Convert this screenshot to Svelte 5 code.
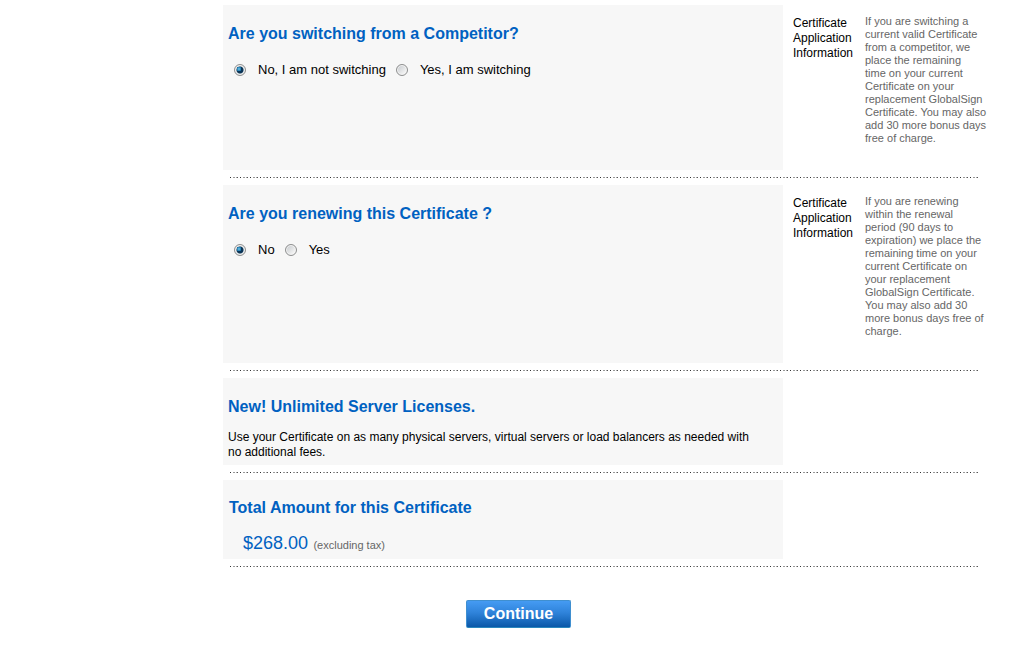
<script>
  let switching = $state('no');
  let renewing = $state('no');
</script>

<main>
  <form onsubmit={(e) => e.preventDefault()}>
    <section class="row">
      <fieldset class="panel">
        <legend>Are you switching from a Competitor?</legend>
        <div class="options">
          <label><input type="radio" name="switching" value="no" bind:group={switching} />No, I am not switching</label>
          <label><input type="radio" name="switching" value="yes" bind:group={switching} />Yes, I am switching</label>
        </div>
      </fieldset>
      <aside>
        <h3>Certificate Application Information</h3>
        <p>
          If you are switching a<br />current valid Certificate<br />from a competitor, we<br />place the remaining<br />time on your current<br />Certificate on your<br />replacement GlobalSign<br />Certificate. You may also<br />add 30 more bonus days<br />free of charge.
        </p>
      </aside>
    </section>
    <div class="divider"></div>

    <section class="row">
      <fieldset class="panel">
        <legend>Are you renewing this Certificate ?</legend>
        <div class="options">
          <label><input type="radio" name="renewing" value="no" bind:group={renewing} />No</label>
          <label><input type="radio" name="renewing" value="yes" bind:group={renewing} />Yes</label>
        </div>
      </fieldset>
      <aside>
        <h3>Certificate Application Information</h3>
        <p>
          If you are renewing<br />within the renewal<br />period (90 days to<br />expiration) we place the<br />remaining time on your<br />current Certificate on<br />your replacement<br />GlobalSign Certificate.<br />You may also add 30<br />more bonus days free of<br />charge.
        </p>
      </aside>
    </section>
    <div class="divider"></div>

    <section class="row">
      <div class="panel licenses">
        <h2>New! Unlimited Server Licenses.</h2>
        <p>Use your Certificate on as many physical servers, virtual servers or load balancers as needed with no additional fees.</p>
      </div>
    </section>
    <div class="divider"></div>

    <section class="row">
      <div class="panel total">
        <h2>Total Amount for this Certificate</h2>
        <p><span class="price">$268.00</span> <small>(excluding tax)</small></p>
      </div>
    </section>
    <div class="divider"></div>

    <div class="actions"><button type="submit">Continue</button></div>
  </form>
</main>

<style>
  :global(body) {
    background: #fff;
  }

  main {
    padding: 5px 47px 20px 223px;
    font-family: Arial, "Liberation Sans", sans-serif;
    font-size: 12px;
    line-height: 15px;
    color: #000;
  }

  .row {
    display: grid;
    grid-template-columns: minmax(0, 1fr) 199px;
  }

  .panel {
    min-width: 0;
    margin: 0;
    border: 0;
    padding: 19px 5px 5px;
    background: #f7f7f7;
  }

  h2,
  legend {
    float: left;
    width: 100%;
    margin: 0;
    padding: 0;
    font-size: 16px;
    line-height: 20px;
    font-weight: bold;
    color: #0061c1;
  }

  .options {
    clear: both;
    display: flex;
    gap: 10px;
    padding: 17px 0 0 6px;
    font-size: 13px;
    line-height: 18px;
  }

  label {
    display: flex;
    align-items: center;
    gap: 12px;
  }

  input {
    appearance: none;
    box-sizing: border-box;
    width: 12px;
    height: 12px;
    margin: 0;
    border: 1px solid #8e8f8f;
    border-radius: 50%;
    background: linear-gradient(135deg, #c3c7cb, #f4f4f4 80%);
    box-shadow: inset 0 0 0 1px #f4f4f4;
  }

  input:checked {
    background: radial-gradient(circle at 40% 40%, #6fcaf0 0, #1a71a6 25%, transparent 26%),
      radial-gradient(circle, #0b3557 0, #0b3557 3px, #d9dcde 4px);
  }

  aside {
    display: grid;
    grid-template-columns: 62px minmax(0, 1fr);
    gap: 10px;
    padding: 10px 0 25px 10px;
  }

  h3 {
    margin: 0;
    padding-top: 1px;
    font-size: 12px;
    font-weight: normal;
  }

  aside p {
    margin: 0;
    font-size: 11px;
    line-height: 13px;
    white-space: nowrap;
    color: #666;
  }

  .panel p {
    clear: both;
    margin: 0;
    padding-top: 13px;
  }

  .panel.licenses {
    padding-right: 20px;
  }

  .panel.total {
    padding: 18px 6px 2px;
  }

  .panel.total p {
    padding: 13px 0 0 14px;
    line-height: 24px;
  }

  .price {
    margin-right: 2px;
    font-size: 18px;
    color: #0061c1;
  }

  small {
    font-size: 11px;
    color: #666;
  }

  .divider {
    height: 1px;
    margin: 7px 4px 7px 7px;
    background: repeating-linear-gradient(
      90deg,
      #333 0 1px,
      #fff 1px 3px,
      #999 3px 5px,
      #fff 5px 6px,
      #aaa 6px 7px,
      #555 7px 8px,
      #fff 8px 10px
    );
  }

  .actions {
    display: flex;
    justify-content: center;
    padding: 26px 168px 0 0;
  }

  button {
    padding: 3px 17px;
    border: 1px solid #3f8fd0;
    border-bottom-color: #2b87bd;
    border-radius: 2px;
    background: linear-gradient(#459bf3, #2f83da 45%, #0b58a8);
    font: bold 16px/20px Arial, "Liberation Sans", sans-serif;
    color: #fff;
  }
</style>
